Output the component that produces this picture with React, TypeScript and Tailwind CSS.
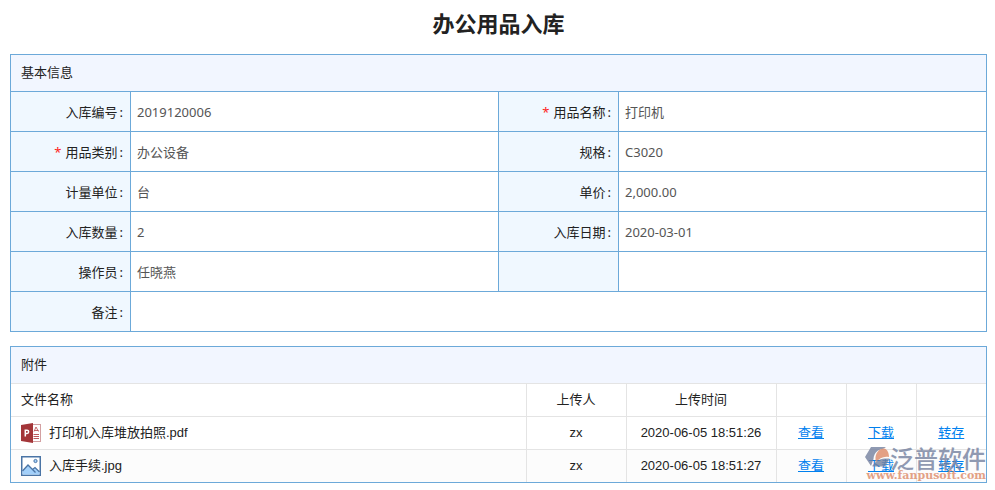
import React from 'react';

const infoRows = [
  [
    { label: '入库编号', value: '2019120006' },
    { label: '用品名称', value: '打印机', required: true },
  ],
  [
    { label: '用品类别', value: '办公设备', required: true },
    { label: '规格', value: 'C3020' },
  ],
  [
    { label: '计量单位', value: '台' },
    { label: '单价', value: '2,000.00' },
  ],
  [
    { label: '入库数量', value: '2' },
    { label: '入库日期', value: '2020-03-01' },
  ],
  [
    { label: '操作员', value: '任晓燕' },
    { label: '', value: '' },
  ],
  [{ label: '备注', value: '' }],
];

const files = [
  { name: '打印机入库堆放拍照.pdf', type: 'pdf', user: 'zx', time: '2020-06-05 18:51:26' },
  { name: '入库手续.jpg', type: 'image', user: 'zx', time: '2020-06-05 18:51:27' },
];

const actions = ['查看', '下载', '转存'];

const PdfIcon = () => (
  <svg width="20" height="20" viewBox="0 0 20 20" className="shrink-0">
    <rect x="10" y="1.5" width="9.5" height="17" fill="#fff" stroke="#d3a0a2" />
    <path d="M13 8.500 15 4l2.500 4.500M13.500 7.500h4" fill="none" stroke="#b5474b" strokeWidth="0.8" />
    <path d="M12.500 11.500h5.500M12.500 13.500h5.500M12.500 15.500h5.500" stroke="#b5474b" strokeWidth="0.9" />
    <path d="M0 2 12 0v20L0 18z" fill="#a33639" />
    <path d="M4.300 13.500v-7M4.300 7.200h1.700a1.500 1.500 0 0 1 0 3.300H4.300" fill="none" stroke="#fff" strokeWidth="1.500" />
  </svg>
);

const ImageIcon = () => (
  <svg width="20" height="20" viewBox="0 0 20 20" className="shrink-0">
    <rect x="0.75" y="0.75" width="18.5" height="18.5" fill="#fff" stroke="#4a74a5" strokeWidth="1.5" />
    <path d="M1.500 15 7 9l4.500 4.500 2.500-2 4.500 4.500v2.500h-17z" fill="#a3d0fa" />
    <path d="M1.500 15 7 9l7.500 7.500M11.500 13.500l2.500-2 4.500 4.500" fill="none" stroke="#4a74a5" strokeWidth="1.3" />
    <circle cx="14.5" cy="5" r="1.6" fill="#a3d0fa" stroke="#4a74a5" />
  </svg>
);

const Watermark = () => (
  <div className="pointer-events-none absolute right-0 bottom-0 flex flex-col items-end opacity-80">
    <div className="flex items-center">
      <svg width="25" height="24" viewBox="0 0 25 24">
        <path d="M6 1h15l-3 2C12.500 3.500 9 7 8.500 13L6 20 0 11z" fill="#74819f" />
        <path d="M10.500 13.500C10 7 14.500 2 19.500 2.500c3 1 4.500 4.500 4.500 8.500-5.500-1-9.500 1-13.500 6z" fill="#dd8a68" />
        <path d="M7.500 19.500C12 13.500 17 12 24.500 12.500L20 20.500H7.500z" fill="#74819f" />
      </svg>
      <span className="font-['Noto_Sans_CJK_SC',sans-serif] text-[24px] leading-6 font-medium text-[#74819f]">泛普软件</span>
    </div>
    <span className="font-['DejaVu_Serif',serif] text-[11px] leading-3 font-bold text-[#dd8a68]">www.fanpusoft.com</span>
  </div>
);

const App = () => {
  return (
    <main className="pr-2 pl-[10px] font-['Noto_Sans','Noto_Sans_CJK_SC',sans-serif] text-[13px] leading-5 text-[#222]">
      <h1 className="mb-2 py-2 text-center text-[22px] leading-[30px] font-bold">办公用品入库</h1>

      <table className="w-full table-fixed border-collapse border border-[#6ca9d9]">
        <colgroup>
          <col className="w-[120px]" />
          <col />
          <col className="w-[120px]" />
          <col />
        </colgroup>
        <thead>
          <tr className="h-[37px] bg-[#f2f6ff]">
            <th colSpan={4} className="px-[10px] pb-[3px] text-left font-normal">基本信息</th>
          </tr>
        </thead>
        <tbody>
          {infoRows.map((row, i) => (
            <tr key={i} className="h-10">
              {row.map((item, j) => (
                <React.Fragment key={j}>
                  <th scope="row" className="border border-[#6ca9d9] bg-[#f0f8ff] px-[7px] text-right font-normal">
                    {item.required && <span className="mr-1 text-[#f22]">*</span>}
                    {item.label}
                    {item.label && <span className="ml-[2px]">:</span>}
                  </th>
                  <td colSpan={row.length === 1 ? 3 : 1} className="border border-[#6ca9d9] px-[6px] text-[#555]">
                    {item.value}
                  </td>
                </React.Fragment>
              ))}
            </tr>
          ))}
        </tbody>
      </table>

      <section className="relative mt-[14px] border border-[#6ca9d9] font-['Liberation_Sans','Noto_Sans_CJK_SC',sans-serif]">
        <h2 className="bg-[#f2f6ff] px-[10px] py-2">附件</h2>
        <table className="w-full table-fixed border-collapse">
          <colgroup>
            <col />
            <col className="w-[100px]" />
            <col className="w-[150px]" />
            <col className="w-[70px]" />
            <col className="w-[70px]" />
            <col className="w-[70px]" />
          </colgroup>
          <thead>
            <tr className="h-[33px] border-t border-[#e4e4e4]">
              <th className="px-[10px] text-left font-normal">文件名称</th>
              <th className="border-l border-[#e4e4e4] font-normal">上传人</th>
              <th className="border-l border-[#e4e4e4] font-normal">上传时间</th>
              {actions.map((action) => (
                <td key={action} className="border-l border-[#e4e4e4]" />
              ))}
            </tr>
          </thead>
          <tbody>
            {files.map((file) => (
              <tr key={file.name} className="h-[33px] border-t border-[#e4e4e4] text-center last:h-8 even:bg-[#fcfcfc]">
                <td className="px-[10px]">
                  <div className="flex items-center gap-2">
                    {file.type === 'pdf' ? <PdfIcon /> : <ImageIcon />}
                    {file.name}
                  </div>
                </td>
                <td className="border-l border-[#e4e4e4]">{file.user}</td>
                <td className="border-l border-[#e4e4e4]">{file.time}</td>
                {actions.map((action) => (
                  <td key={action} className="border-l border-[#e4e4e4]">
                    <a href="#" className="text-[#0080ee] underline">{action}</a>
                  </td>
                ))}
              </tr>
            ))}
          </tbody>
        </table>
        <Watermark />
      </section>
    </main>
  );
};

export default App;
